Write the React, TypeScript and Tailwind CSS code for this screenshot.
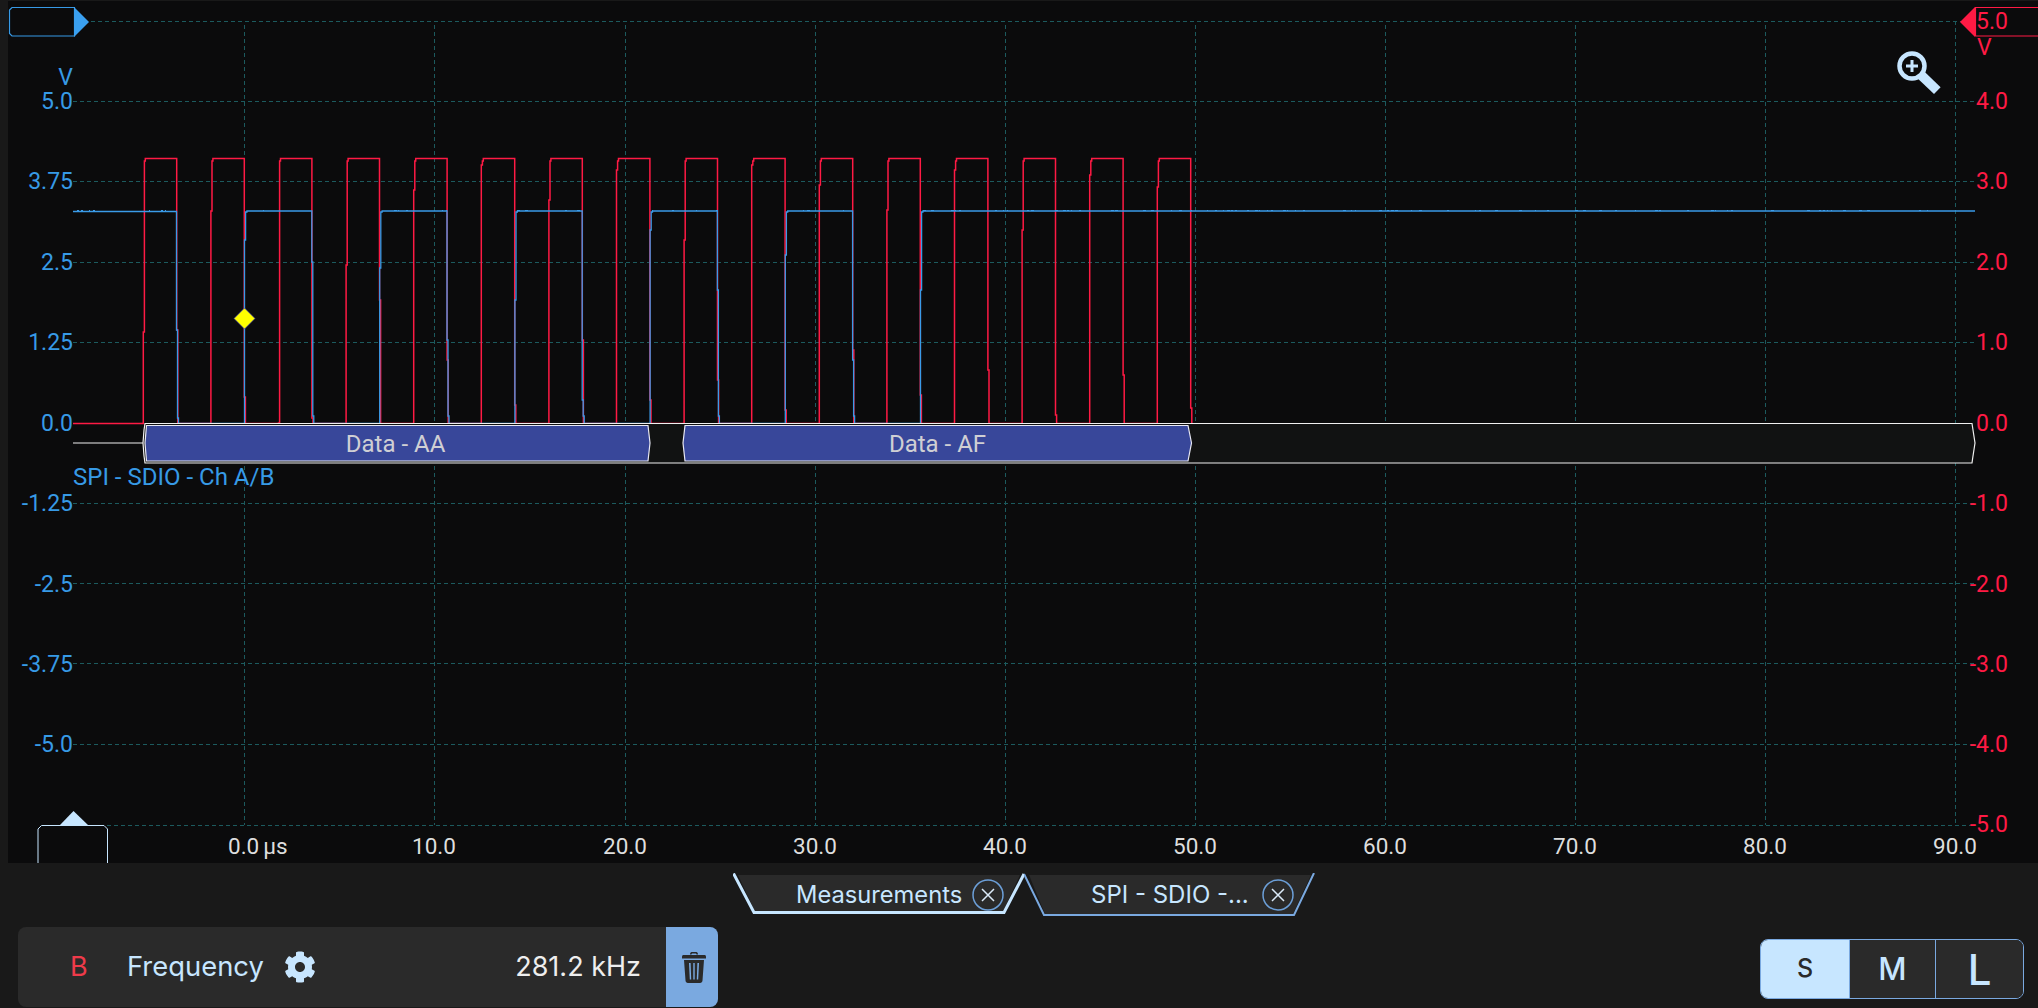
import { FaCog } from 'react-icons/fa';

// all chart coordinates are page pixels, the svg viewBox starts at the plot corner
const LEFT_TICKS = [
  { y: 101, label: '5.0' },
  { y: 181, label: '3.75' },
  { y: 262, label: '2.5' },
  { y: 342, label: '1.25' },
  { y: 423, label: '0.0' },
  { y: 503, label: '-1.25' },
  { y: 584, label: '-2.5' },
  { y: 664, label: '-3.75' },
  { y: 744, label: '-5.0' },
];

const RIGHT_TICKS = [
  { y: 101, label: '4.0' },
  { y: 181, label: '3.0' },
  { y: 262, label: '2.0' },
  { y: 342, label: '1.0' },
  { y: 423, label: '0.0' },
  { y: 503, label: '-1.0' },
  { y: 584, label: '-2.0' },
  { y: 664, label: '-3.0' },
  { y: 744, label: '-4.0' },
  { y: 824, label: '-5.0' },
];

const TIME_TICKS = [
  { x: 434, label: '10.0' },
  { x: 625, label: '20.0' },
  { x: 815, label: '30.0' },
  { x: 1005, label: '40.0' },
  { x: 1195, label: '50.0' },
  { x: 1385, label: '60.0' },
  { x: 1575, label: '70.0' },
  { x: 1765, label: '80.0' },
  { x: 1955, label: '90.0' },
];

const H_GRID = [101.5, 181.5, 262.5, 342.5, 503.5, 583.5, 663.5, 744.5];
const V_GRID = [244.5, 434.5, 625.5, 815.5, 1005.5, 1195.5, 1385.5, 1575.5, 1765.5];

const RED_RISE_STEP = [332, 211, 423, 265, 190, 165, 200, 170, 240, 165, 185, 210, 170, 230, 175, 187];
const RED_FALL_STEP = [330, 397, 418, 300, 360, 405, 340, 400, 380, 410, 350, 395, 370, 415, 375, 408];

const BLUE_RISE_STEP = [240, 268, 300, 230, 255, 290];
const BLUE_FALL_STEP = [262, 340, 400, 290, 360, 380];

function redPath() {
  let d = 'M73 423.5';
  RED_RISE_STEP.forEach((step, i) => {
    const x0 = 143.3 + 67.6 * i;
    const x1 = x0 + 33.4;
    d += ` H${x0} V${step} H${x0 + 1.1} V161 H${x0 + 2} V158.5 H${x1} V${RED_FALL_STEP[i]} H${x1 + 1.1} V423.5`;
  });
  return d;
}

function bluePath() {
  let d = 'M73 211.5 H176.5 V330 H177.5 V418 H178.5 V423.5';
  BLUE_RISE_STEP.forEach((step, i) => {
    const x0 = 244.5 + 135.2 * i;
    const x1 = x0 + 67.3;
    d += ` H${x0} V${step} H${x0 + 1.1} V212 H${x0 + 2.4} V211`;
    if (i < BLUE_RISE_STEP.length - 1) {
      d += ` H${x1} V${BLUE_FALL_STEP[i]} H${x1 + 1} V416 H${x1 + 2} V423.5`;
    }
  });
  return d + ' H1975';
}

// tiny noise sitting on top of the flat blue level
function bluePathNoise() {
  let seed = 17;
  let d = '';
  const spans = [[73, 176], [247, 311], [382, 447], [517, 582], [652, 717], [787, 852], [923, 1975]];
  spans.forEach(([from, to]) => {
    for (let x = from; x < to; x += 4) {
      seed = (seed * 1103 + 12345) % 65536;
      if (seed % 100 < 26) d += `M${x} 210.5h${1 + (seed % 3)}`;
    }
  });
  return d;
}

function Trigger() {
  return (
    <>
      <path d="M12 7.5 H74.5 V36 H12 L9.5 33.5 V10 Z" fill="none" stroke="#379ae6" strokeWidth="1.2" />
      <path d="M74 7 L89 22 L74 37 Z" fill="#3aa0f0" />
      <path d="M2040 7.5 H1975.5 V36 H2040" fill="none" stroke="#ff1a44" strokeWidth="1.2" />
      <path d="M1975 7 L1960 22 L1975 37 Z" fill="#ff1a44" />
    </>
  );
}

function Magnifier() {
  return (
    <g>
      <circle cx="1912" cy="66" r="12.5" fill="none" stroke="#c7e6ff" strokeWidth="4.5" />
      <path d="M1921 75 L1937.3 90.7" stroke="#c7e6ff" strokeWidth="9.5" />
      <path d="M1906 66 H1918 M1912 60 V72" stroke="#c7e6ff" strokeWidth="3" />
    </g>
  );
}

function Chart() {
  return (
    <svg viewBox="8 1 2030 862" className="block h-[862px] w-[2030px] [font-family:Roboto,sans-serif]">
      {/* grid */}
      <g stroke="#1c5a5e" strokeWidth="1" strokeDasharray="4 3" fill="none">
        <path d="M91 21.5 H1975" />
        {H_GRID.map((y) => (
          <path key={y} d={`M73 ${y} H1975`} />
        ))}
        <path d="M107 825.5 H1975" />
        {V_GRID.map((x) => (
          <path key={x} d={`M${x} 25 V825`} />
        ))}
        <path d="M1955.5 21 V825" />
      </g>

      <path d={redPath()} fill="none" stroke="#ff1a44" strokeWidth="1.5" />
      <path d={bluePath()} fill="none" stroke="#3a9be8" strokeWidth="1.3" />
      <path d={bluePathNoise()} fill="none" stroke="#3a9be8" strokeWidth="1" shapeRendering="crispEdges" />

      {/* decoded bus */}
      <path d="M73 443 H143" stroke="#f0f0f0" strokeWidth="1.2" />
      <path d="M145 423.5 H1972 L1973 430 L1975 443 L1973 456 L1972 463 H145 L144 456 L143 443 L144 430 Z" fill="#111212" stroke="#f0f0f0" strokeWidth="1.2" />
      <path d="M146.5 425.5 H648 L650 443 L648 461 H146.5 L145 443 Z" fill="#38479a" stroke="#e8e8f4" strokeWidth="1.2" />
      <path d="M685 425.5 H1188 L1191.5 443 L1188 461 H685 L683 443 Z" fill="#38479a" stroke="#e8e8f4" strokeWidth="1.2" />
      <text x="395.5" y="444" textAnchor="middle" dominantBaseline="central" className="fill-[#cfcfd4] text-[24px]">Data - AA</text>
      <text x="937.5" y="444" textAnchor="middle" dominantBaseline="central" className="fill-[#cfcfd4] text-[24px]">Data - AF</text>
      <text x="73" y="477" dominantBaseline="central" className="fill-[#379ae6] text-[24px]">SPI - SDIO - Ch A/B</text>

      {/* axes */}
      <text x="73" y="77" textAnchor="end" dominantBaseline="central" className="fill-[#379ae6] text-[23px]">V</text>
      {LEFT_TICKS.map((t) => (
        <text key={t.y} x="73" y={t.y} textAnchor="end" dominantBaseline="central" className="fill-[#379ae6] text-[23px]">{t.label}</text>
      ))}
      <text x="1977" y="47" dominantBaseline="central" className="fill-[#ff1a44] text-[23px]">V</text>
      <text x="2008" y="21" textAnchor="end" dominantBaseline="central" className="fill-[#ff1a44] text-[23px]">5.0</text>
      {RIGHT_TICKS.map((t) => (
        <text key={t.y} x="2008" y={t.y} textAnchor="end" dominantBaseline="central" className="fill-[#ff1a44] text-[23px]">{t.label}</text>
      ))}
      <text x="228" y="846" dominantBaseline="central" className="fill-[#dedede] text-[22.5px]">0.0<tspan dx="4">µs</tspan></text>
      {TIME_TICKS.map((t) => (
        <text key={t.x} x={t.x} y="846" textAnchor="middle" dominantBaseline="central" className="fill-[#dedede] text-[22.5px]">{t.label}</text>
      ))}

      <Trigger />
      <Magnifier />

      {/* time cursor */}
      <path d="M73.5 811 L88 825 H60 Z" fill="#c7e6ff" />
      <path d="M38 864 V829 L41.5 825.5 H104 L107.5 829 V864" fill="#0b0b0c" stroke="#c7e6ff" strokeWidth="1" />

      {/* diamond marker */}
      <path d="M244.5 308 L255 318.5 L244.5 329 L234 318.5 Z" fill="#ffff00" stroke="#2a2ad0" strokeWidth="0.6" />
    </svg>
  );
}

function CloseIcon() {
  return (
    <svg viewBox="0 0 32 32" className="h-8 w-8">
      <circle cx="16" cy="16" r="15" fill="none" stroke="#6c9fd8" strokeWidth="1.5" />
      <path d="M10 10 L22 22 M22 10 L10 22" stroke="#dbeaf8" strokeWidth="1.5" />
    </svg>
  );
}

function TrashIcon() {
  return (
    <svg viewBox="0 0 24 32" className="ml-[4px] h-[32px] w-[24px]" fill="#2a2a2a">
      <path d="M8 3.5 C8 1.5 9 1 10.5 1 H13.5 C15 1 16 1.5 16 3.5 L14.5 3.5 C14.5 2.8 14 2.4 13.5 2.4 H10.5 C10 2.4 9.5 2.8 9.5 3.5 Z" />
      <path d="M1.5 4 H22.5 C23.3 4 24 4.7 24 5.5 V7.5 H0 V5.5 C0 4.7 .7 4 1.5 4 Z" />
      <path fillRule="evenodd" d="M2 9 H22 L20.5 29.5 C20.4 30.9 19.5 32 18 32 H6 C4.5 32 3.6 30.9 3.5 29.5 Z M7 12 L7.8 28.5 H9.2 L8.6 12 Z M11.3 12 V28.5 H12.7 V12 Z M15.4 12 L14.8 28.5 H16.2 L17 12 Z" />
    </svg>
  );
}

export default function App() {
  return (
    <div className="flex h-[1008px] w-[2038px] flex-col overflow-hidden bg-[#191919] [font-family:Inter,sans-serif]">
      <div className="ml-2 mt-px h-[862px] bg-[#0b0b0c]">
        <Chart />
      </div>

      {/* tabs */}
      <div className="ml-[733px] mt-[10px] flex h-[44px]">
        <div className="relative flex h-[44px] w-[291px] items-center pl-[63px]">
          <svg viewBox="0 0 291 44" className="absolute inset-0 h-[44px] w-[291px]">
            <path d="M5 2 H287 L270 39 H22 Z" fill="#2a2a2a" />
            <path d="M0.5 0.5 L21 39.5 H271 L291 1" fill="none" stroke="#c7e6ff" strokeWidth="3" />
          </svg>
          <span className="relative text-[23.7px] text-[#c7e6ff]">Measurements</span>
          <span className="relative ml-auto mr-[20px] flex"><CloseIcon /></span>
        </div>
        <div className="relative flex h-[44px] w-[291px] items-center pl-[67px]">
          <svg viewBox="0 0 291 44" className="absolute inset-0 h-[44px] w-[291px]">
            <path d="M5 2 H287 L269 41 H21 Z" fill="#2a2a2a" />
            <path d="M0 1 L20 42 H270 L290 0" fill="none" stroke="#7aa9e0" strokeWidth="2" />
          </svg>
          <span className="relative text-[24px] text-[#c7e6ff]">SPI - SDIO -...</span>
          <span className="relative ml-auto mr-[21px] flex"><CloseIcon /></span>
        </div>
      </div>

      <div className="mt-[10px] flex justify-between pl-[18px] pr-[14px]">
        {/* measurement row */}
        <div className="flex h-[80px] w-[700px] items-center overflow-hidden rounded-lg bg-[#2a2a2a]">
          <span className="ml-[52px] w-[57px] text-[27px] text-[#ef3b4a]">B</span>
          <span className="text-[27.4px] text-[#c7e6ff]">Frequency</span>
          <FaCog className="ml-[20px] text-[32px] text-[#c7e6ff]" />
          <span className="ml-auto mr-[25px] text-[27px] text-[#eeeeee]">281.2 kHz</span>
          <div className="flex h-full w-[52px] items-center justify-center bg-[#7aa9e0]">
            <TrashIcon />
          </div>
        </div>

        {/* size selector */}
        <div className="mt-[12px] flex h-[60px] w-[264px] overflow-hidden rounded-lg border border-[#7aa9e0]">
          <div className="flex w-[88px] items-center justify-center bg-[#c7e6ff] text-[25px] font-medium text-[#2a2a2a]">S</div>
          <div className="flex w-[86px] items-center justify-center border-l border-[#7aa9e0] bg-[#2a2a2a] text-[31px] font-medium text-[#c7e6ff]">M</div>
          <div className="flex flex-1 items-center justify-center border-l border-[#7aa9e0] bg-[#2a2a2a] text-[42px] font-medium text-[#c7e6ff]">L</div>
        </div>
      </div>
    </div>
  );
}
